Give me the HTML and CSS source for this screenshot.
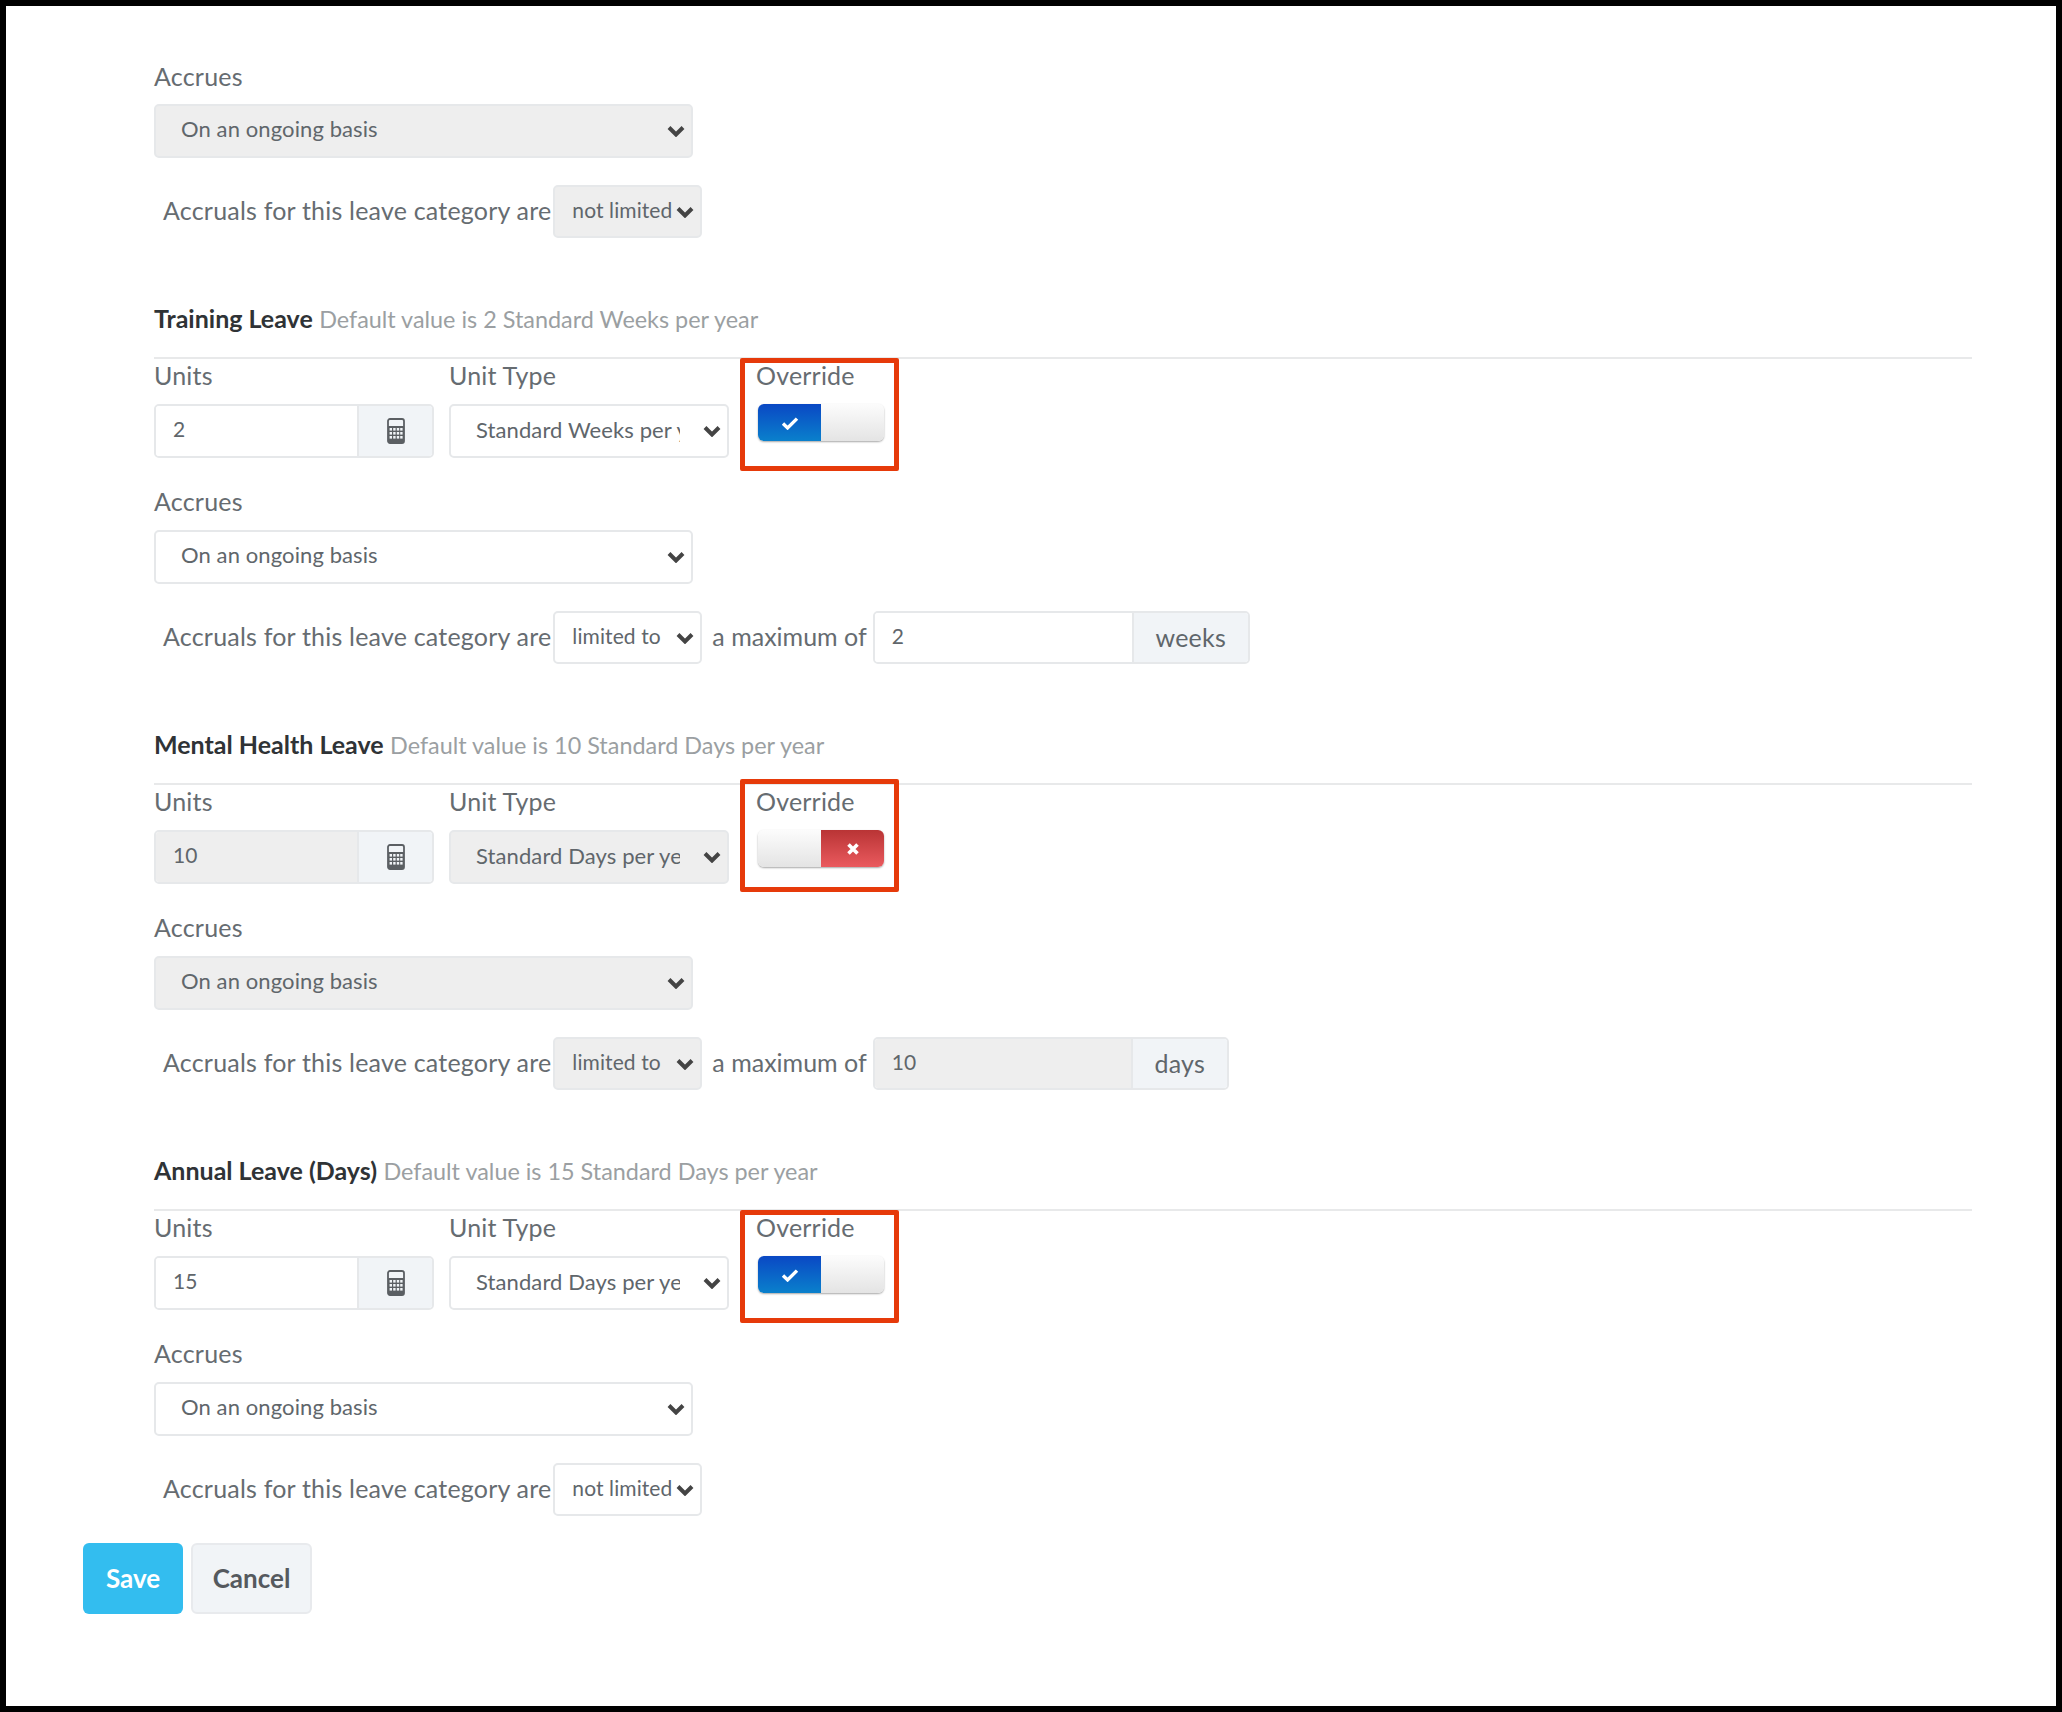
FILE: index.html
```html
<!DOCTYPE html>
<html lang="en">
<head>
<meta charset="utf-8">
<title>Leave overrides</title>
<link rel="stylesheet" href="styles.css">
</head>
<body>
<main class="frame">
  <form class="form">
    <div class="intro">
      <label class="label">Accrues</label>
      <select class="field accrues" disabled><option>On an ongoing basis</option></select>
      <div class="limit-row">
        <span class="limit-text">Accruals for this leave category are</span>
        <select class="field limit" disabled><option>not limited</option></select>
      </div>
    </div>

    <section class="leave">
      <h2 class="leave-title"><strong>Training Leave</strong> <span>Default value is 2 Standard Weeks per year</span></h2>
      <div class="unit-row">
        <div class="units"><label class="label">Units</label>
          <div class="group"><input class="group-input" value="2"><span class="addon calc"><svg width="18" height="26" viewBox="0 0 18 26"><use href="#calc"/></svg></span></div></div>
        <div class="unit-type"><label class="label">Unit Type</label>
          <select class="field type"><option>Standard Weeks per year</option></select></div>
        <div class="override"><label class="label">Override</label>
          <div class="toggle"><span class="seg on"><svg width="18" height="14" viewBox="0 0 18 14"><use href="#check"/></svg></span><span class="seg blank"></span></div></div>
      </div>
      <label class="label accrues-label">Accrues</label>
      <select class="field accrues"><option>On an ongoing basis</option></select>
      <div class="limit-row">
        <span class="limit-text">Accruals for this leave category are</span>
        <select class="field limit"><option>limited to</option></select>
        <span class="limit-text max">a maximum of</span>
        <div class="group max-group"><input class="group-input" value="2"><span class="addon word">weeks</span></div>
      </div>
    </section>

    <section class="leave">
      <h2 class="leave-title"><strong>Mental Health Leave</strong> <span>Default value is 10 Standard Days per year</span></h2>
      <div class="unit-row">
        <div class="units"><label class="label">Units</label>
          <div class="group"><input class="group-input" value="10" disabled><span class="addon calc"><svg width="18" height="26" viewBox="0 0 18 26"><use href="#calc"/></svg></span></div></div>
        <div class="unit-type"><label class="label">Unit Type</label>
          <select class="field type" disabled><option>Standard Days per year</option></select></div>
        <div class="override override-high"><label class="label">Override</label>
          <div class="toggle"><span class="seg blank"></span><span class="seg off"><svg width="14" height="14" viewBox="0 0 14 14"><use href="#cross"/></svg></span></div></div>
      </div>
      <label class="label accrues-label">Accrues</label>
      <select class="field accrues" disabled><option>On an ongoing basis</option></select>
      <div class="limit-row">
        <span class="limit-text">Accruals for this leave category are</span>
        <select class="field limit" disabled><option>limited to</option></select>
        <span class="limit-text max">a maximum of</span>
        <div class="group max-group days"><input class="group-input" value="10" disabled><span class="addon word">days</span></div>
      </div>
    </section>

    <section class="leave">
      <h2 class="leave-title"><strong>Annual Leave (Days)</strong> <span>Default value is 15 Standard Days per year</span></h2>
      <div class="unit-row">
        <div class="units"><label class="label">Units</label>
          <div class="group"><input class="group-input" value="15"><span class="addon calc"><svg width="18" height="26" viewBox="0 0 18 26"><use href="#calc"/></svg></span></div></div>
        <div class="unit-type"><label class="label">Unit Type</label>
          <select class="field type"><option>Standard Days per year</option></select></div>
        <div class="override"><label class="label">Override</label>
          <div class="toggle"><span class="seg on"><svg width="18" height="14" viewBox="0 0 18 14"><use href="#check"/></svg></span><span class="seg blank"></span></div></div>
      </div>
      <label class="label accrues-label">Accrues</label>
      <select class="field accrues"><option>On an ongoing basis</option></select>
      <div class="limit-row">
        <span class="limit-text">Accruals for this leave category are</span>
        <select class="field limit"><option>not limited</option></select>
      </div>
    </section>

    <div class="actions">
      <button type="button" class="btn save">Save</button>
      <button type="button" class="btn cancel">Cancel</button>
    </div>
  </form>
</main>

<svg class="defs" width="0" height="0" aria-hidden="true">
  <symbol id="calc" viewBox="0 0 18 26">
    <rect x="1" y="1" width="16" height="24" rx="2" fill="none" stroke="#5b5f63" stroke-width="1.8"/>
    <rect x="1" y="8" width="16" height="17" rx="1" fill="#5b5f63"/>
    <g fill="#f1f4f7">
      <rect x="2.6" y="10" width="2.4" height="2.6"/><rect x="6.2" y="10" width="2.4" height="2.6"/><rect x="9.8" y="10" width="2.4" height="2.6"/><rect x="13.2" y="10" width="2.4" height="2.6"/>
      <rect x="2.6" y="14" width="2.4" height="2.6"/><rect x="6.2" y="14" width="2.4" height="2.6"/><rect x="9.8" y="14" width="2.4" height="2.6"/><rect x="13.2" y="14" width="2.4" height="2.6"/>
      <rect x="2.6" y="18" width="2.4" height="2.6"/><rect x="6.2" y="18" width="2.4" height="2.6"/><rect x="9.8" y="18" width="2.4" height="2.6"/><rect x="13.2" y="18" width="2.4" height="2.6"/>
    </g>
  </symbol>
  <symbol id="check" viewBox="0 0 18 14">
    <path d="M2 7.5l4.6 4.4L16 2.6" fill="none" stroke="#fff" stroke-width="3.4"/>
  </symbol>
  <symbol id="cross" viewBox="0 0 14 14">
    <path d="M2.5 2.5l9 9M11.5 2.5l-9 9" fill="none" stroke="#fff" stroke-width="3.6"/>
  </symbol>
</svg>
</body>
</html>
```

FILE: styles.css
```css
* { box-sizing: border-box; }

html, body { margin: 0; height: 100%; }

body {
  background: #000;
  font-family: Lato, "Liberation Sans", sans-serif;
  color: #60666b;
}

.defs { position: absolute; }

.frame {
  height: 1712px;
  border: 6px solid #000;
  background: #fff;
}

.form { padding: 55px 84px 0 148px; }

.intro { margin-bottom: 1px; }

.label {
  display: block;
  height: 30px;
  line-height: 30px;
  font-size: 25px;
  letter-spacing: .2px;
  color: #666c71;
  margin-bottom: 14px;
}

.intro .label { margin-bottom: 13px; }

.field {
  display: block;
  appearance: none;
  -webkit-appearance: none;
  height: 54px;
  font: inherit;
  font-size: 22px;
  letter-spacing: .1px;
  color: #60666b;
  background-color: #fff;
  background-image: url("data:image/svg+xml,%3Csvg xmlns='http://www.w3.org/2000/svg' width='18' height='12' viewBox='0 0 18 12'%3E%3Cpath d='M2 2.5l7 7 7-7' fill='none' stroke='%23444' stroke-width='4'/%3E%3C/svg%3E");
  background-repeat: no-repeat;
  border: 2px solid #e6e8ea;
  border-radius: 5px;
  opacity: 1;
}

.field:disabled { background-color: #eee; }

.accrues {
  width: 539px;
  padding: 0 40px 5px 25px;
  background-position: right 6px center;
}

.limit-row {
  display: flex;
  align-items: center;
  height: 53px;
  margin-top: 27px;
  padding-left: 9px;
}

.limit-text {
  padding-bottom: 3px;
  font-size: 25px;
  letter-spacing: .2px;
  color: #666c71;
  white-space: nowrap;
}

.limit {
  width: 149px;
  height: 53px;
  margin-left: 2px;
  padding: 0 20px 5px 17px;
  font-size: 21px;
  background-position: right 6px center;
}

.limit-text.max { margin-left: 10px; letter-spacing: 0; }

.leave { margin-top: 66px; }

.leave-title {
  margin: 0 0 23px;
  height: 30px;
  line-height: 28px;
  font-size: 25px;
  font-weight: 400;
}

.leave-title strong { font-weight: 700; color: #2f3336; }
.leave-title span { font-size: 23.4px; color: #9b9fa2; }

.unit-row {
  display: flex;
  align-items: flex-start;
  gap: 15px;
  border-top: 2px solid #e8e9ea;
  padding-top: 1px;
  margin-bottom: 28px;
}

.units { width: 280px; }
.unit-type { width: 280px; }

.group {
  display: flex;
  height: 54px;
  background: #fff;
  border: 2px solid #e6e8ea;
  border-radius: 5px;
  overflow: hidden;
}

.group-input {
  flex: 1;
  min-width: 0;
  border: 0;
  outline: 0;
  padding: 0 17px 5px;
  font: inherit;
  font-size: 21px;
  color: #60666b;
  background: #fff;
}

.group-input:disabled { background: #eee; opacity: 1; -webkit-text-fill-color: #60666b; }

.addon {
  display: flex;
  align-items: center;
  justify-content: center;
  background: #f1f4f7;
  border-left: 2px solid #e6e8ea;
  color: #60666b;
}

.calc { width: 75px; }
.word { padding-bottom: 2px; font-size: 25px; letter-spacing: .2px; }

.type {
  width: 280px;
  padding: 0 47px 4px 25px;
  background-position: right 6px center;
}

.override {
  width: 159px;
  height: 113px;
  margin: -2px 0 -15px -4px;
  border: 5px solid #e63a0a;
  border-radius: 2px;
  padding-left: 11px;
}

.override .label { margin-top: -3px; }

.override-high { margin-top: -7px; margin-bottom: -10px; }
.override-high .label { margin-top: 2px; }

.toggle {
  display: flex;
  width: 126px;
  height: 37px;
  margin-left: 2px;
  border-radius: 6px;
  overflow: hidden;
  box-shadow: 0 1px 2px rgba(0, 0, 0, .35);
}

.seg {
  flex: 1;
  display: flex;
  align-items: center;
  justify-content: center;
}

.seg.on { background: linear-gradient(#0a48c4, #0a80cc); }
.seg.off { background: linear-gradient(#b93435, #ea5a5e); }
.seg.blank { background: linear-gradient(#fcfcfc, #e4e4e4); }

.max-group { width: 377px; height: 53px; margin-left: 6px; }
.max-group .word { width: 116px; }
.max-group.days { width: 356px; }
.max-group.days .word { width: 96px; }

.actions {
  display: flex;
  gap: 8px;
  margin: 27px 0 0 -71px;
}

.btn {
  height: 71px;
  padding-bottom: 2px;
  font: inherit;
  font-size: 26px;
  font-weight: 700;
  border-radius: 6px;
  cursor: pointer;
}

.save {
  width: 100px;
  border: 0;
  background: #33bdef;
  color: #fff;
}

.cancel {
  width: 121px;
  background: #f1f4f7;
  border: 2px solid #e8eaed;
  color: #55595e;
}
```
